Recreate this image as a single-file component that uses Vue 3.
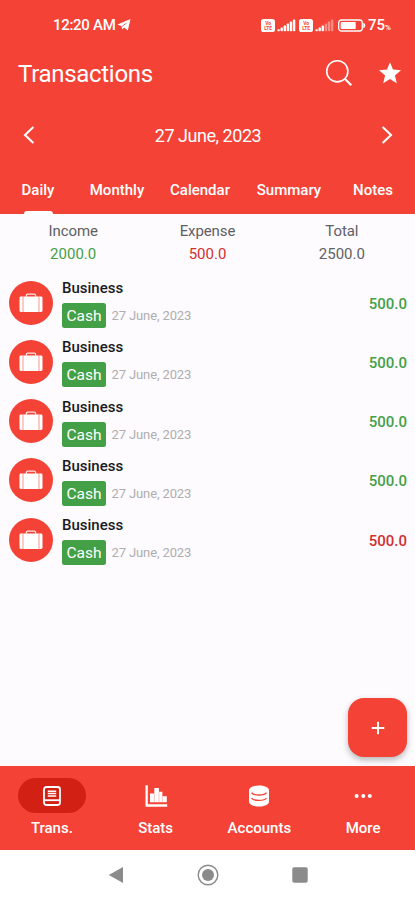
<script setup>
const tabs = ['Daily', 'Monthly', 'Calendar', 'Summary', 'Notes']
const totals = [
  { label: 'Income', value: '2000.0', tone: 'green' },
  { label: 'Expense', value: '500.0', tone: 'red' },
  { label: 'Total', value: '2500.0', tone: 'grey' },
]
const rows = [1, 2, 3, 4, 5].map((id) => ({
  id,
  title: 'Business',
  account: 'Cash',
  date: '27 June, 2023',
  amount: '500.0',
  tone: id === 5 ? 'red' : 'green',
}))
const signals = [
  { id: 1, faded: 5 },
  { id: 2, faded: 3 },
]
</script>

<template>
  <div class="screen">
    <header class="header">
      <div class="status">
        <span class="clock">12:20 AM</span>
        <svg class="plane" width="14" height="14" viewBox="0 0 14 14"><path d="M0.5 6.6 13.5 1 10.8 12.6 7.2 9.6 5.2 11.4 4.6 8.2Z" fill="#fff" /><path d="M5.2 8.3 9.5 5" stroke="#f44336" stroke-width=".8" fill="none" /></svg>
        <span class="space"></span>
        <template v-for="s in signals" :key="s.id">
          <svg class="lte" width="14" height="13" viewBox="0 0 14 13">
            <rect width="14" height="13" rx="2.6" fill="#fff" />
            <text x="7" y="5.6" text-anchor="middle" class="lte-text">Vo</text>
            <text x="7" y="10.8" text-anchor="middle" class="lte-text">LTE</text>
          </svg>
          <svg class="bars" width="19" height="13" viewBox="0 0 19 13">
            <rect v-for="n in 6" :key="n" :x="(n - 1) * 3.1 + 0.4" :y="12.3 - n * 1.95" width="2.4" :height="n * 1.95" rx=".7" fill="#fff" :opacity="n > s.faded && s.id === 2 ? 0.4 : 1" />
          </svg>
        </template>
        <svg class="battery" width="28" height="13" viewBox="0 0 28 13">
          <rect x=".7" y="1" width="23.6" height="11" rx="2.8" fill="none" stroke="#fff" stroke-width="1.3" />
          <rect x="2.7" y="3" width="15" height="7" rx=".8" fill="#fff" />
          <path d="M25.3 3.5Q27.3 4.5 27.3 6.5T25.3 9.5Z" fill="#fff" />
        </svg>
        <span class="pct">75<small>%</small></span>
      </div>

      <div class="titlebar">
        <h1>Transactions</h1>
        <svg width="28" height="28" viewBox="0 0 28 28" fill="none" stroke="#fff" stroke-width="1.6"><circle cx="12.3" cy="12.3" r="10.6" /><path d="M19.8 19.8 26.3 26.3" stroke-width="2" /></svg>
        <svg class="star" width="24" height="24" viewBox="0 0 24 24"><path d="M12 1.2 15 8.6 23 9.2 16.9 14.4 18.8 22.3 12 18 5.2 22.3 7.1 14.4 1 9.2 9 8.6Z" fill="#fff" /></svg>
      </div>

      <div class="datebar">
        <svg width="12" height="18" viewBox="0 0 12 18"><path d="M10.4 1 2 9 10.4 17" /></svg>
        <span>27 June, 2023</span>
        <svg width="12" height="18" viewBox="0 0 12 18"><path d="M1.6 1 10 9 1.6 17" /></svg>
      </div>

      <nav class="tabs">
        <span v-for="(t, i) in tabs" :key="t" class="tab" :class="{ active: i === 0 }">{{ t }}</span>
      </nav>
    </header>

    <main class="content">
      <section class="totals">
        <div v-for="t in totals" :key="t.label" class="total">
          <span class="label">{{ t.label }}</span>
          <span :class="t.tone">{{ t.value }}</span>
        </div>
      </section>

      <ul class="list">
        <li v-for="r in rows" :key="r.id" class="row">
          <span class="avatar">
            <svg width="26" height="22" viewBox="0 0 26 22">
              <path d="M8.4 4.8V3.4Q8.4 2.1 9.8 2.1H16.2Q17.6 2.1 17.6 3.4V4.8" fill="none" stroke="#fff" stroke-opacity=".85" stroke-width="1.3" />
              <rect x="1.5" y="4.6" width="23" height="15.4" rx="1.4" fill="#fff" />
              <path d="M5 4.6V20M21 4.6V20" stroke="#f44336" stroke-opacity=".7" stroke-width=".8" />
            </svg>
          </span>
          <div class="info">
            <strong>{{ r.title }}</strong>
            <div class="meta">
              <span class="chip">{{ r.account }}</span>
              <span class="date">{{ r.date }}</span>
            </div>
          </div>
          <span class="amount" :class="r.tone">{{ r.amount }}</span>
        </li>
      </ul>

      <button class="fab" aria-label="Add">
        <svg width="14" height="14" viewBox="0 0 14 14"><path d="M7 .7V13.3M.7 7H13.3" stroke="#fff" stroke-width="1.9" /></svg>
      </button>
    </main>

    <nav class="bottom">
      <div class="item">
        <span class="pill">
          <svg width="18" height="20" viewBox="0 0 18 20" fill="none" stroke="#fff">
            <rect x="1" y="1" width="16" height="18" rx="2.4" stroke-width="1.8" />
            <path d="M1.5 14.2H17" stroke-width="1.8" />
            <path d="M4.8 5.2H13.2M4.8 7.6H13.2M4.8 10H13.2" stroke-width="1.5" />
          </svg>
        </span>
        <span>Trans.</span>
      </div>
      <div class="item">
        <span class="icon">
          <svg width="24" height="24" viewBox="0 0 24 24" fill="#fff"><path d="M1.5 1.2H3.8V20.2H23.2V22.8H1.5ZM6 9.6H10.3V18.3H6ZM10.3 4H15V18.3H10.3ZM15 7.8H18.4V18.3H15ZM18.4 12.3H22.8V18.3H18.4Z" /><path d="M10.4 9.6V18.3M15 7.8V18.3M18.4 12.3V18.3" stroke="#f44336" stroke-opacity=".6" stroke-width=".5" /></svg>
        </span>
        <span>Stats</span>
      </div>
      <div class="item">
        <span class="icon">
          <svg width="22" height="24" viewBox="0 0 22 24"><path d="M1 6.5C1 -.2 21 -.2 21 6.5V17.5C21 24.2 1 24.2 1 17.5Z" fill="#fff" /><path d="M3.5 8.6Q5 11 11 11T18.5 8.6M3.5 14Q5 16.4 11 16.4T18.5 14" fill="none" stroke="#f44336" stroke-width="1.4" /></svg>
        </span>
        <span>Accounts</span>
      </div>
      <div class="item">
        <span class="icon">
          <svg width="20" height="6" viewBox="0 0 20 6" fill="#fff"><circle cx="3.6" cy="3" r="2" /><circle cx="10.3" cy="3" r="2" /><circle cx="16.8" cy="3" r="2" /></svg>
        </span>
        <span>More</span>
      </div>
    </nav>

    <footer class="system">
      <svg width="16" height="18" viewBox="0 0 16 18"><path d="M15 1V17L.8 9Z" fill="#8b8b8b" /></svg>
      <svg width="22" height="22" viewBox="0 0 22 22"><circle cx="11" cy="11" r="9.8" fill="none" stroke="#8b8b8b" stroke-width="1.4" /><circle cx="11" cy="11" r="6" fill="#8b8b8b" /></svg>
      <svg width="16" height="16" viewBox="0 0 16 16"><rect x=".3" y=".3" width="15.4" height="15.4" rx="2" fill="#8b8b8b" /></svg>
    </footer>
  </div>
</template>

<style>
body {
  margin: 0;
  background: #fff;
}
</style>

<style scoped>
* {
  box-sizing: border-box;
}
svg {
  display: block;
  flex: none;
}
.screen {
  width: 415px;
  height: 900px;
  display: flex;
  flex-direction: column;
  overflow: hidden;
  font-family: Roboto, 'Liberation Sans', sans-serif;
  background: #fdfbfe;
}
.header {
  height: 214px;
  flex: none;
  background: #f44336;
  color: #fff;
}
.status {
  height: 44px;
  padding: 6px 24px 0 53px;
  display: flex;
  align-items: center;
}
.clock {
  font-size: 15px;
  font-weight: 500;
  letter-spacing: -0.3px;
}
.plane {
  margin-left: 2px;
}
.space {
  flex: 1;
}
.lte-text {
  font-size: 4.8px;
  font-weight: 700;
  fill: #f44336;
}
.bars {
  margin: 0 3px 0 2px;
}
.battery {
  margin: 0 2px 0 1px;
}
.pct {
  font-size: 15px;
  font-weight: 500;
}
.pct small {
  font-size: 8px;
}
.titlebar {
  height: 58px;
  padding: 0 13px 0 18px;
  display: flex;
  align-items: center;
}
.titlebar h1 {
  flex: 1;
  margin: 2px 0 0;
  font-size: 24px;
  line-height: 30px;
  font-weight: 400;
  letter-spacing: -0.3px;
}
.titlebar .star {
  margin-left: 25px;
}
.datebar {
  height: 66px;
  padding: 0 22px 0 23px;
  display: flex;
  align-items: center;
  justify-content: space-between;
  font-size: 18px;
  letter-spacing: -0.47px;
}
.datebar path {
  fill: none;
  stroke: #fff;
  stroke-width: 2.1;
}
.tabs {
  height: 46px;
  display: grid;
  grid-template-columns: 76px 82px 84px 94px 74px;
  font-size: 15px;
  font-weight: 500;
}
.tab {
  display: flex;
  flex-direction: column;
  align-items: center;
  line-height: 44px;
}
.tab.active::after {
  content: '';
  width: 29px;
  height: 3px;
  margin-top: -1px;
  border-radius: 3px 3px 0 0;
  background: #fff;
}
.content {
  position: relative;
  height: 552px;
  flex: none;
}
.totals {
  padding: 6px 6px 0;
  display: grid;
  grid-template-columns: repeat(3, 1fr);
  font-size: 15px;
  line-height: 23px;
}
.total {
  display: flex;
  flex-direction: column;
  align-items: center;
}
.label {
  letter-spacing: -0.1px;
}
.label,
.grey {
  color: #606063;
}
.green {
  color: #43a047;
}
.red {
  color: #d32f2f;
}
.list {
  margin: 7px 0 0;
  padding: 0;
  list-style: none;
}
.row {
  height: 59.25px;
  padding: 0 8px 0 9px;
  display: flex;
  align-items: center;
}
.avatar {
  width: 44px;
  height: 44px;
  border-radius: 50%;
  background: #f44336;
  display: flex;
  align-items: center;
  justify-content: center;
}
.info {
  flex: 1;
  margin-left: 9px;
  padding-top: 2px;
}
.info strong {
  display: block;
  font-size: 15px;
  line-height: 18px;
  font-weight: 500;
  color: #1a1a1c;
}
.meta {
  display: flex;
  align-items: center;
  margin-top: 6px;
}
.chip {
  width: 44px;
  height: 25px;
  border-radius: 2.5px;
  background: #43a047;
  color: #fff;
  font-size: 15.5px;
  line-height: 26px;
  text-align: center;
}
.date {
  margin-left: 5.5px;
  font-size: 13px;
  letter-spacing: -0.12px;
  color: #aeadb0;
}
.amount {
  margin-top: 2px;
  font-size: 15px;
  font-weight: 500;
}
.fab {
  position: absolute;
  right: 8px;
  bottom: 9px;
  width: 59px;
  height: 59px;
  padding: 0;
  border: 0;
  border-radius: 16px;
  background: #f44336;
  box-shadow: 0 3px 6px rgba(0, 0, 0, 0.28);
  display: flex;
  align-items: center;
  justify-content: center;
}
.bottom {
  height: 84px;
  flex: none;
  padding-top: 12px;
  background: #f44336;
  color: #fff;
  display: grid;
  grid-template-columns: repeat(4, 1fr);
  font-size: 15px;
  font-weight: 500;
}
.item {
  display: flex;
  flex-direction: column;
  align-items: center;
  gap: 6px;
}
.pill,
.icon {
  width: 68px;
  height: 35px;
  display: flex;
  align-items: center;
  justify-content: center;
}
.pill {
  border-radius: 18px;
  background: #d32014;
}
.system {
  height: 50px;
  background: #fff;
  display: flex;
  align-items: center;
  justify-content: center;
  gap: 73px;
}
</style>
